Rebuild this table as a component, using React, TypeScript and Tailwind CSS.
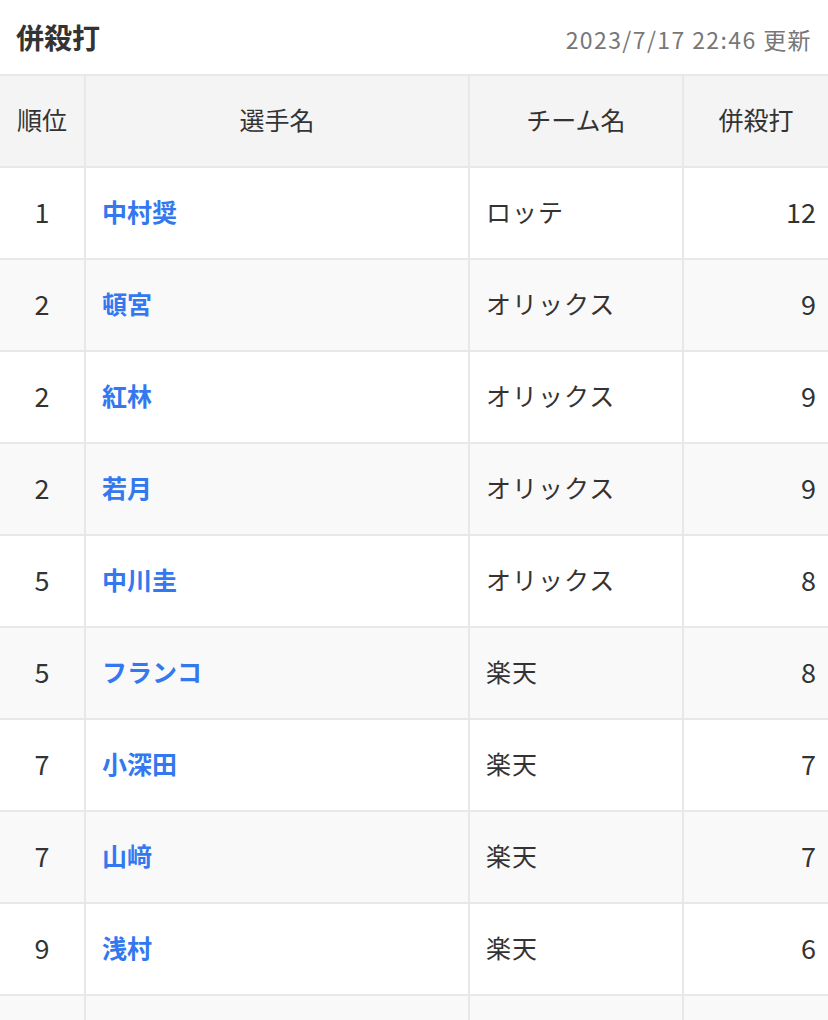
const rows = [
  { rank: '1', name: '中村奨', team: 'ロッテ', value: '12' },
  { rank: '2', name: '頓宮', team: 'オリックス', value: '9' },
  { rank: '2', name: '紅林', team: 'オリックス', value: '9' },
  { rank: '2', name: '若月', team: 'オリックス', value: '9' },
  { rank: '5', name: '中川圭', team: 'オリックス', value: '8' },
  { rank: '5', name: 'フランコ', team: '楽天', value: '8' },
  { rank: '7', name: '小深田', team: '楽天', value: '7' },
  { rank: '7', name: '山﨑', team: '楽天', value: '7' },
  { rank: '9', name: '浅村', team: '楽天', value: '6' },
  { rank: '', name: '', team: '', value: '' },
];

export default function App() {
  return (
    <div className="w-[828px] h-[1020px] overflow-hidden bg-white text-[#333] font-['Noto_Sans_CJK_JP','Noto_Sans',sans-serif]">
      {/* Title */}
      <div className="flex items-center justify-between h-[74px] pl-[16px] pr-[16px]">
        <h1 className="text-[28px] font-bold text-[#333] leading-none">併殺打</h1>
        <span className="text-[23px] tracking-[1.4px] text-[#777] leading-none mt-[4px]">2023/7/17 22:46 更新</span>
      </div>

      {/* Table */}
      <div className="border-t-2 border-[#e8e8e8]">
        <div className="flex h-[92px] bg-[#f4f4f4] border-b-2 border-[#e8e8e8] text-[25px] leading-none">
          <div className="w-[84px] flex items-center justify-center pb-[3px]">順位</div>
          <div className="w-[384px] border-l-2 border-[#e8e8e8] flex items-center justify-center pb-[3px]">選手名</div>
          <div className="w-[214px] border-l-2 border-[#e8e8e8] flex items-center justify-center pb-[3px]">チーム名</div>
          <div className="flex-1 border-l-2 border-[#e8e8e8] flex items-center justify-center pb-[3px]">併殺打</div>
        </div>
        {rows.map((r, i) => (
          <div
            key={i}
            className={`flex h-[92px] border-b-2 border-[#e8e8e8] text-[25px] leading-none ${i % 2 === 1 ? 'bg-[#f9f9f9]' : 'bg-white'}`}
          >
            <div className="w-[84px] flex items-center justify-center text-[27px] pb-[3px]">{r.rank}</div>
            <div className="w-[384px] border-l-2 border-[#e8e8e8] flex items-center pl-[16px] pb-[3px] font-bold text-[#3478f0]">
              {r.name}
            </div>
            <div className="w-[214px] border-l-2 border-[#e8e8e8] flex items-center pl-[16px] pb-[3px] tracking-[1px]">{r.team}</div>
            <div className="flex-1 border-l-2 border-[#e8e8e8] flex items-center justify-end pr-[12px] pb-[3px] text-[27px]">
              {r.value}
            </div>
          </div>
        ))}
      </div>
    </div>
  );
}
